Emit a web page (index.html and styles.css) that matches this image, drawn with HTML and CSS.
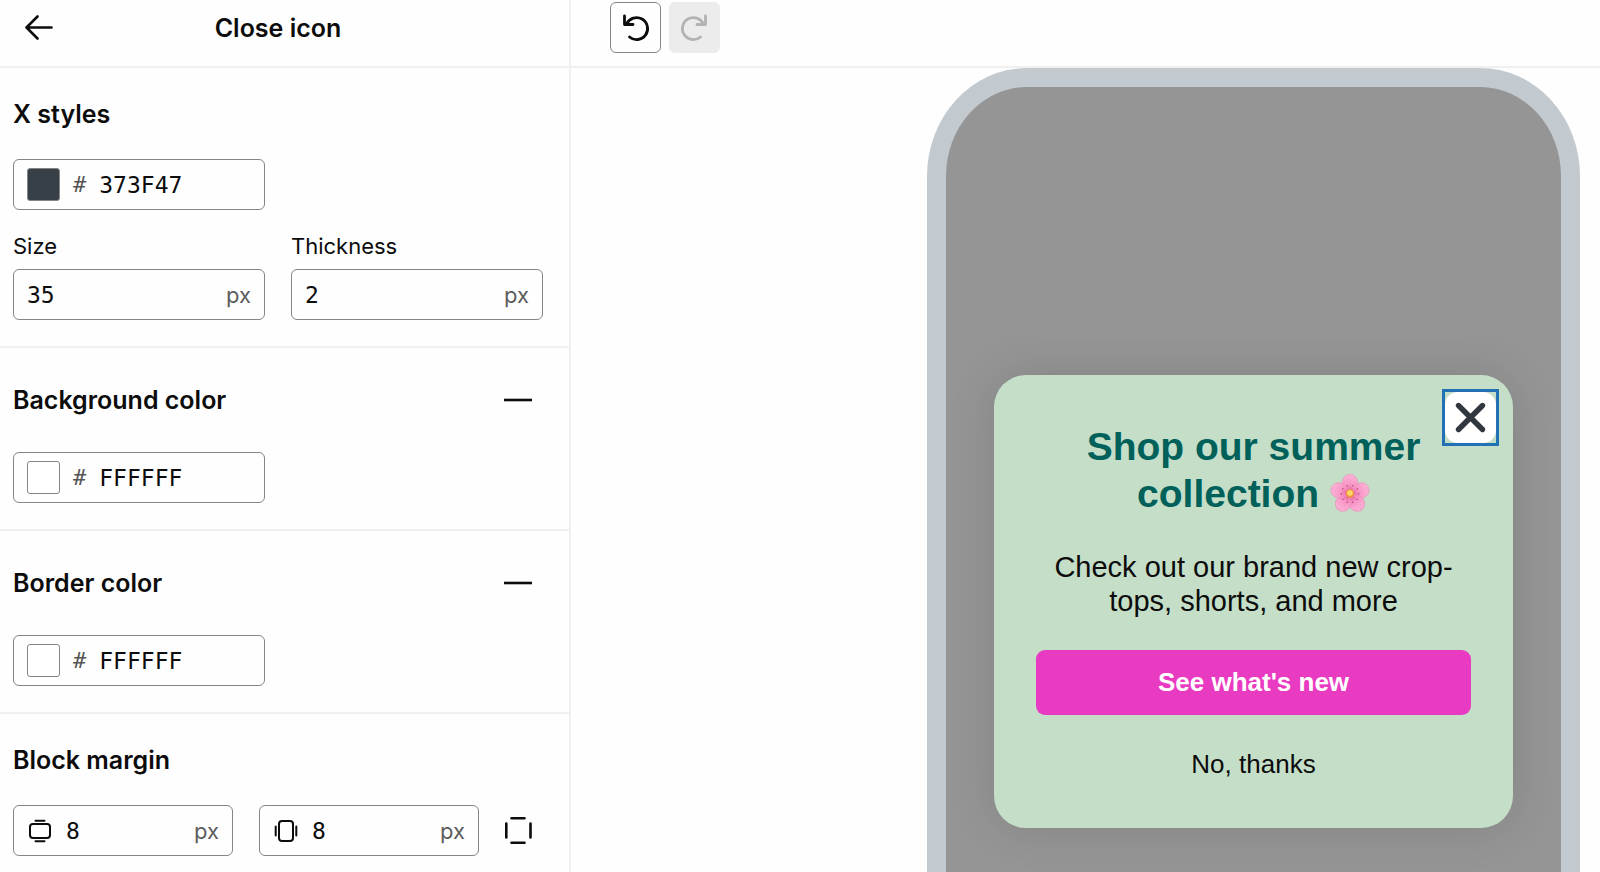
FILE: index.html
```html
<!DOCTYPE html>
<html lang="en">
<head>
    <meta charset="UTF-8">
    <meta name="viewport" content="width=device-width, initial-scale=1.0">
    <title>Close icon</title>
    <link rel="stylesheet" href="styles.css">
</head>
<body>
    <div class="editor">
        <aside class="sidebar">
            <header class="sidebar-header">
                <button type="button" aria-label="Back">
                    <svg width="28" height="28" viewBox="0 0 28 28" fill="none" stroke="#0c0c0c" stroke-width="2.6" stroke-linecap="round" stroke-linejoin="round">
                        <path d="M26.500 13.500H2M12.500 2.500L1.500 13.500l11 11"/>
                    </svg>
                </button>
                <h1>Close icon</h1>
            </header>

            <section class="panel">
                <h2>X styles</h2>
                <div class="field">
                    <span class="swatch swatch-dark"></span>
                    <span class="hash">#</span>
                    <input type="text" value="373F47" aria-label="Icon color">
                </div>
                <div class="field-row">
                    <div class="field-group">
                        <label for="size">Size</label>
                        <div class="field">
                            <input id="size" type="text" value="35">
                            <span class="unit">px</span>
                        </div>
                    </div>
                    <div class="field-group">
                        <label for="thickness">Thickness</label>
                        <div class="field">
                            <input id="thickness" type="text" value="2">
                            <span class="unit">px</span>
                        </div>
                    </div>
                </div>
            </section>

            <section class="panel">
                <div class="panel-title">
                    <h2>Background color</h2>
                    <button type="button" aria-label="Remove background color">
                        <svg width="28" height="28" viewBox="0 0 28 28" stroke="#0c0c0c" stroke-width="2.6"><path d="M0 14h28"/></svg>
                    </button>
                </div>
                <div class="field">
                    <span class="swatch"></span>
                    <span class="hash">#</span>
                    <input type="text" value="FFFFFF" aria-label="Background color">
                </div>
            </section>

            <section class="panel">
                <div class="panel-title">
                    <h2>Border color</h2>
                    <button type="button" aria-label="Remove border color">
                        <svg width="28" height="28" viewBox="0 0 28 28" stroke="#0c0c0c" stroke-width="2.6"><path d="M0 14h28"/></svg>
                    </button>
                </div>
                <div class="field">
                    <span class="swatch"></span>
                    <span class="hash">#</span>
                    <input type="text" value="FFFFFF" aria-label="Border color">
                </div>
            </section>

            <section class="panel">
                <h2>Block margin</h2>
                <div class="margin-row">
                    <div class="field">
                        <svg class="field-icon" width="24" height="24" viewBox="0 0 24 24" fill="none" stroke="#0c0c0c" stroke-width="2" stroke-linecap="round">
                            <rect x="2" y="5" width="20" height="14" rx="3"/>
                            <path d="M7.500 1.700h9M7.500 22.300h9"/>
                        </svg>
                        <input type="text" value="8" aria-label="Vertical margin">
                        <span class="unit">px</span>
                    </div>
                    <div class="field">
                        <svg class="field-icon" width="24" height="24" viewBox="0 0 24 24" fill="none" stroke="#0c0c0c" stroke-width="2" stroke-linecap="round">
                            <rect x="5" y="2" width="14" height="20" rx="3"/>
                            <path d="M1.700 7.500v9M22.300 7.500v9"/>
                        </svg>
                        <input type="text" value="8" aria-label="Horizontal margin">
                        <span class="unit">px</span>
                    </div>
                    <button type="button" aria-label="Edit each side">
                        <svg width="28" height="28" viewBox="0 0 28 28" fill="none" stroke="#0c0c0c" stroke-width="2.6" stroke-linecap="round">
                            <path d="M6.500 1.300h13M6.500 25.700h13M1.300 6.500v14M25.500 6.500v14"/>
                        </svg>
                    </button>
                </div>
            </section>
        </aside>

        <main class="preview">
            <div class="toolbar">
                <button class="tool" type="button" aria-label="Undo">
                    <svg width="28" height="28" viewBox="0 0 28 28" fill="none" stroke="currentColor" stroke-width="2.8" stroke-linecap="round" stroke-linejoin="round">
                        <path d="M2.500 2v8.500h8.500M4.600 10A11 11 0 1 1 7.500 23"/>
                    </svg>
                </button>
                <button class="tool" type="button" aria-label="Redo" disabled>
                    <svg width="28" height="28" viewBox="0 0 28 28" fill="none" stroke="currentColor" stroke-width="2.8" stroke-linecap="round" stroke-linejoin="round">
                        <path d="M24.500 2v8.500h-8.500M22.400 10A11 11 0 1 0 19.500 23"/>
                    </svg>
                </button>
            </div>

            <div class="phone">
                <div class="popup">
                    <button class="popup-close" type="button" aria-label="Close">
                        <svg width="51" height="51" viewBox="0 0 51 51">
                            <rect width="51" height="51" rx="13" fill="#fff"/>
                            <path d="M13.500 13.500l24 24M37.500 13.500l-24 24" stroke="#31373e" stroke-width="5.400" stroke-linecap="round"/>
                        </svg>
                    </button>
                    <h2>Shop our summer collection
                        <svg class="flower" role="img" aria-label="Cherry blossom" width="40" height="40" viewBox="0 0 40 40">
                            <defs>
                                <radialGradient id="petal" gradientUnits="userSpaceOnUse" cx="20" cy="21" r="20">
                                    <stop offset="0" stop-color="#e8609f"/>
                                    <stop offset="0.400" stop-color="#f792c4"/>
                                    <stop offset="1" stop-color="#fdb5d8"/>
                                </radialGradient>
                                <g id="leaf">
                                    <path d="M20 21C14.500 17.500 11 11 12.800 6.500c1.200-3 4-4.500 6-5.500l1.200 1.800L21.200 1c2 1 4.800 2.500 6 5.500C29 11 25.500 17.500 20 21z" fill="url(#petal)" stroke="#e583b4" stroke-width=".5"/>
                                    <path d="M20 18v-5M19.200 17l-1.700-4M20.800 17l1.700-4" stroke="#de6ba6" stroke-width=".5" fill="none"/>
                                    <circle cx="17.300" cy="12.500" r=".6" fill="#8f2c5e"/>
                                    <circle cx="22.700" cy="12.500" r=".6" fill="#8f2c5e"/>
                                </g>
                            </defs>
                            <use href="#leaf"/>
                            <use href="#leaf" transform="rotate(72 20 21)"/>
                            <use href="#leaf" transform="rotate(144 20 21)"/>
                            <use href="#leaf" transform="rotate(216 20 21)"/>
                            <use href="#leaf" transform="rotate(288 20 21)"/>
                            <circle cx="20" cy="20.500" r="4.200" fill="#ee9440"/>
                            <circle cx="20" cy="20" r="2.800" fill="#ffd968"/>
                        </svg>
                    </h2>
                    <p>Check out our brand new crop-tops, shorts, and more</p>
                    <button class="popup-action" type="button">See what's new</button>
                    <button class="popup-dismiss" type="button">No, thanks</button>
                </div>
            </div>
        </main>
    </div>
</body>
</html>
```
FILE: styles.css
```css
* {
    box-sizing: border-box;
}
body {
    margin: 0;
    background: #fefefe;
    color: #0c0c0c;
    font-family: Inter, "Liberation Sans", sans-serif;
    font-size: 22px;
}
h1, h2, p {
    margin: 0;
}
button {
    padding: 0;
    border: none;
    background: none;
    font: inherit;
    color: inherit;
    cursor: pointer;
}
svg {
    display: block;
}
.editor {
    display: flex;
    height: 100vh;
    overflow: hidden;
}

/* Sidebar */
.sidebar {
    flex: 0 0 571px;
    border-right: 2px solid #f0f0f0;
}
.sidebar-header,
.toolbar {
    display: flex;
    align-items: center;
    height: 68px;
    padding-bottom: 11px;
    border-bottom: 2px solid #f0f0f0;
}
.sidebar-header {
    padding-left: 25px;
    padding-right: 66px;
}
h1, h2 {
    font-size: 25px;
    line-height: 32px;
    font-weight: 600;
}
h1 {
    flex: 1;
    text-align: center;
}
.panel {
    padding: 30px 25px 26px 13px;
    border-bottom: 2px solid #f0f0f0;
}
.panel:last-child {
    border-bottom: none;
}
.panel h2 {
    margin-bottom: 29px;
}
.panel-title {
    display: flex;
    justify-content: space-between;
    align-items: center;
    padding: 6px 12px 36px 0;
}
.panel-title h2 {
    margin: 0;
}
.field {
    display: flex;
    align-items: center;
    width: 252px;
    height: 51px;
    padding: 0 13px;
    border: 1px solid #858585;
    border-radius: 6px;
}
.field input {
    flex: 1;
    min-width: 0;
    padding: 0;
    border: none;
    outline: none;
    background: none;
    color: #0c0c0c;
    font-family: "DejaVu Sans Mono", monospace;
    font-size: 23px;
}
.swatch {
    width: 33px;
    height: 33px;
    border: 1px solid #858585;
    border-radius: 3px;
    background: #fff;
}
.swatch-dark {
    background: #373f47;
}
.hash {
    margin: 0 13px;
    color: #555;
    font-family: "DejaVu Sans Mono", monospace;
}
.unit {
    color: #5c5c5c;
}
.field-row {
    display: flex;
    gap: 26px;
    margin-top: 20px;
}
.field-group label {
    display: block;
    margin-bottom: 7px;
    line-height: 32px;
}
.margin-row {
    display: flex;
    align-items: center;
    gap: 26px;
}
.margin-row .field {
    width: 220px;
}
.field-icon {
    margin: 0 14px 0 1px;
}

/* Preview */
.preview {
    flex: 1;
    display: flex;
    flex-direction: column;
}
.toolbar {
    flex: none;
    gap: 8px;
    padding-left: 39px;
}
.tool {
    display: flex;
    align-items: center;
    justify-content: center;
    width: 51px;
    height: 51px;
    border: 1px solid #858585;
    border-radius: 6px;
}
.tool:disabled {
    border-color: #ececec;
    background: #ececec;
    color: #b3b3b3;
}
.phone {
    flex: 1;
    align-self: flex-end;
    width: 653px;
    margin-right: 20px;
    padding: 288px 48px 0;
    border: 19px solid #c2c9cf;
    border-bottom: none;
    border-radius: 100px 100px 0 0 / 108px 108px 0 0;
    background: #959595;
}
.popup {
    position: relative;
    padding: 48px 42px 47px;
    border-radius: 32px;
    background: #c5dec8;
    box-shadow: 0 0 48px rgba(0, 0, 0, 0.12);
    color: #0c0c0c;
    font-family: "Liberation Sans", Arial, sans-serif;
    text-align: center;
}
.popup h2 {
    margin-bottom: 33px;
    color: #00605a;
    font-size: 39px;
    line-height: 47px;
    font-weight: 700;
}
.flower {
    display: inline-block;
    vertical-align: -6px;
}
.popup p {
    margin-bottom: 32px;
    font-size: 29px;
    line-height: 34px;
}
.popup-close {
    position: absolute;
    top: 14px;
    right: 14px;
    border: 3px solid #2271b5;
}
.popup-action {
    display: block;
    width: 100%;
    height: 65px;
    border-radius: 9px;
    background: #e93bc1;
    color: #fff;
    font-size: 26px;
    font-weight: 700;
}
.popup-dismiss {
    margin-top: 32px;
    font-size: 26px;
    line-height: 34px;
}
```
